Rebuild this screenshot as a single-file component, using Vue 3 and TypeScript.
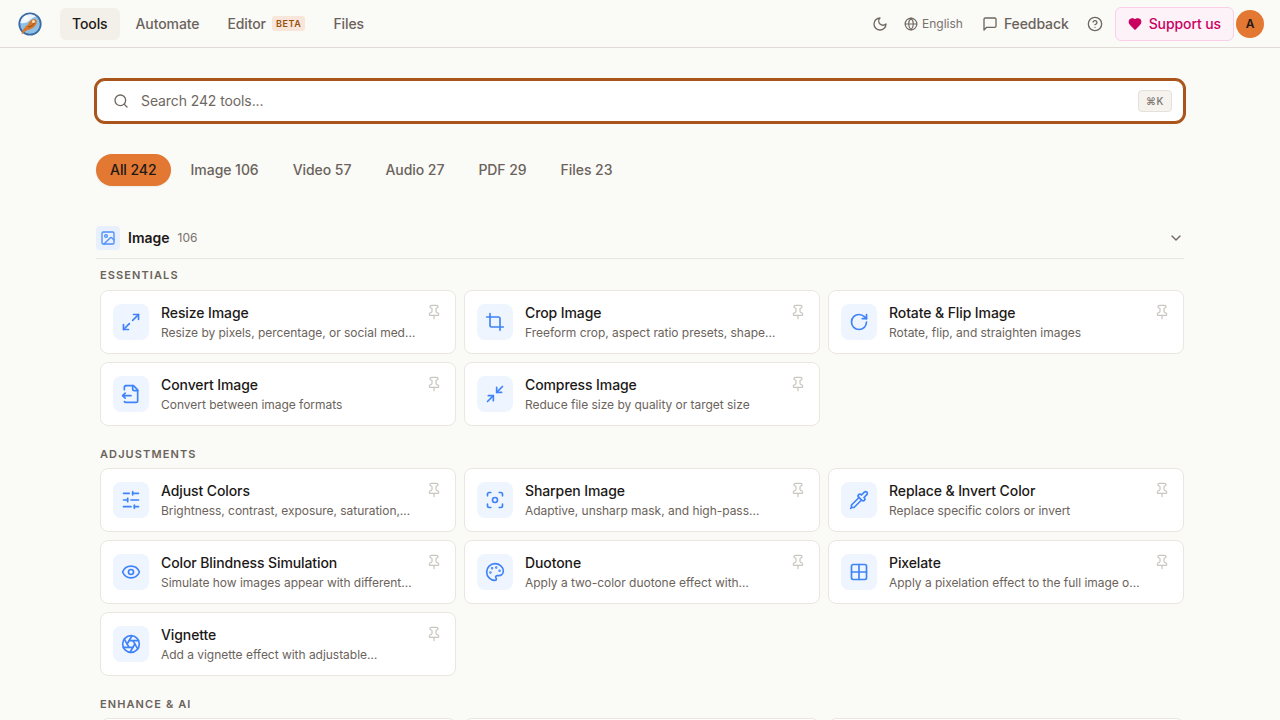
<script setup lang="ts">
interface Tool {
  title: string;
  desc: string;
  icon: string;
}

const icons: Record<string, string> = {
  resize: '<path d="M15 3h6v6"/><path d="m21 3-7 7"/><path d="m3 21 7-7"/><path d="M9 21H3v-6"/>',
  crop: '<path d="M6 2v14a2 2 0 0 0 2 2h14"/><path d="M18 22V8a2 2 0 0 0-2-2H2"/>',
  rotate: '<path d="M21 12a9 9 0 1 1-9-9c2.52 0 4.93 1 6.74 2.74L21 8"/><path d="M21 3v5h-5"/>',
  convert: '<path d="M14 2v4a2 2 0 0 0 2 2h4"/><path d="M4 7V4a2 2 0 0 1 2-2 2 2 0 0 0-2 2"/><path d="M4.063 20.999a2 2 0 0 0 2 1L18 22a2 2 0 0 0 2-2V7l-5-5H6"/><path d="m5 11-3 3"/><path d="m5 17-3-3h10"/>',
  compress: '<path d="m14 10 7-7"/><path d="M20 10h-6V4"/><path d="m3 21 7-7"/><path d="M4 14h6v6"/>',
  sliders: '<path d="M21 4h-7"/><path d="M10 4H3"/><path d="M21 12h-9"/><path d="M8 12H3"/><path d="M21 20h-5"/><path d="M12 20H3"/><path d="M14 2v4"/><path d="M8 10v4"/><path d="M16 18v4"/>',
  focus: '<circle cx="12" cy="12" r="3"/><path d="M3 7V5a2 2 0 0 1 2-2h2"/><path d="M17 3h2a2 2 0 0 1 2 2v2"/><path d="M21 17v2a2 2 0 0 1-2 2h-2"/><path d="M7 21H5a2 2 0 0 1-2-2v-2"/>',
  pipette: '<path d="m2 22 1-1h3l9-9"/><path d="M3 21v-3l9-9"/><path d="m15 6 3.4-3.4a2.1 2.1 0 1 1 3 3L18 9l.4.4a2.1 2.1 0 1 1-3 3l-3.8-3.8a2.1 2.1 0 1 1 3-3l.4.4Z"/>',
  eye: '<path d="M2.062 12.348a1 1 0 0 1 0-.696 10.75 10.75 0 0 1 19.876 0 1 1 0 0 1 0 .696 10.75 10.75 0 0 1-19.876 0"/><circle cx="12" cy="12" r="3"/>',
  palette: '<circle cx="13.5" cy="6.5" r=".5" fill="currentColor"/><circle cx="17.5" cy="10.5" r=".5" fill="currentColor"/><circle cx="8.5" cy="7.5" r=".5" fill="currentColor"/><circle cx="6.5" cy="12.5" r=".5" fill="currentColor"/><path d="M12 2C6.5 2 2 6.5 2 12s4.5 10 10 10c.926 0 1.648-.746 1.648-1.688 0-.437-.18-.835-.437-1.125-.29-.289-.438-.652-.438-1.125a1.64 1.64 0 0 1 1.668-1.668h1.996c3.051 0 5.555-2.503 5.555-5.554C21.965 6.012 17.461 2 12 2z"/>',
  grid: '<path d="M12 3v18"/><path d="M3 12h18"/><rect x="3" y="3" width="18" height="18" rx="2"/>',
  aperture: '<circle cx="12" cy="12" r="10"/><path d="m14.31 8 5.74 9.94"/><path d="M9.69 8h11.48"/><path d="m7.38 12 5.74-9.94"/><path d="M9.69 16 3.95 6.06"/><path d="M14.31 16H2.83"/><path d="m16.62 12-5.74 9.94"/>',
};

const groups: { label: string; tools: Tool[] }[] = [
  {
    label: "Essentials",
    tools: [
      { title: "Resize Image", desc: "Resize by pixels, percentage, or social med…", icon: "resize" },
      { title: "Crop Image", desc: "Freeform crop, aspect ratio presets, shape…", icon: "crop" },
      { title: "Rotate & Flip Image", desc: "Rotate, flip, and straighten images", icon: "rotate" },
      { title: "Convert Image", desc: "Convert between image formats", icon: "convert" },
      { title: "Compress Image", desc: "Reduce file size by quality or target size", icon: "compress" },
    ],
  },
  {
    label: "Adjustments",
    tools: [
      { title: "Adjust Colors", desc: "Brightness, contrast, exposure, saturation,…", icon: "sliders" },
      { title: "Sharpen Image", desc: "Adaptive, unsharp mask, and high-pass…", icon: "focus" },
      { title: "Replace & Invert Color", desc: "Replace specific colors or invert", icon: "pipette" },
      { title: "Color Blindness Simulation", desc: "Simulate how images appear with different…", icon: "eye" },
      { title: "Duotone", desc: "Apply a two-color duotone effect with…", icon: "palette" },
      { title: "Pixelate", desc: "Apply a pixelation effect to the full image o…", icon: "grid" },
      { title: "Vignette", desc: "Add a vignette effect with adjustable…", icon: "aperture" },
    ],
  },
];

const filters = ["All 242", "Image 106", "Video 57", "Audio 27", "PDF 29", "Files 23"];
</script>

<template>
  <div class="page">
    <header class="topbar">
      <div class="nav-left">
        <svg class="logo" viewBox="0 0 24 24" width="24" height="24">
          <circle cx="12" cy="12" r="11.6" fill="#3c6ba3" />
          <circle cx="12" cy="12" r="9.800" fill="#8fc0e6" />
          <path d="M2.400 11C3 6 7 2.300 12 2.300c2.500 0 4.500 1 6 2.200-3 .6-5 2.500-7 4.500-2.500 2-5.500 2.500-8.600 2z" fill="#eef5fa" />
          <circle cx="8" cy="6" r="2.200" fill="#fff" />
          <path d="M3.500 22.500c.4-3.500 1.800-5.500 3.500-7 .5-1.500 1.500-2 3-3 1-2.500 3-5 6-5.500 2.800 0 3.300 2.500 2.300 5-1.500 3.200-4.300 5.200-7.800 5.800-2.700.6-4.200 2.700-7 4.700z" fill="#d8782c" />
          <path d="M10.500 15c2-.2 4.800-1.700 6-4" stroke="#8c4a17" stroke-width="1" fill="none" />
          <circle cx="15.500" cy="9.500" r="1.500" fill="#f7e3c8" />
        </svg>
        <nav class="nav-links">
          <a class="nav-link active">Tools</a>
          <a class="nav-link">Automate</a>
          <a class="nav-link">Editor <span class="beta">BETA</span></a>
          <a class="nav-link">Files</a>
        </nav>
      </div>
      <div class="nav-right">
        <svg class="ico moon" viewBox="0 0 24 24" width="16" height="16"><path d="M12 3a6 6 0 0 0 9 9 9 9 0 1 1-9-9Z" /></svg>
        <div class="lang">
          <svg class="ico" viewBox="0 0 24 24" width="14" height="14"><circle cx="12" cy="12" r="10" /><path d="M12 2a14.500 14.500 0 0 0 0 20 14.500 14.500 0 0 0 0-20" /><path d="M2 12h20" /></svg>
          <span>English</span>
        </div>
        <div class="feedback">
          <svg class="ico" viewBox="0 0 24 24" width="16" height="16"><path d="M21 15a2 2 0 0 1-2 2H7l-4 4V5a2 2 0 0 1 2-2h14a2 2 0 0 1 2 2z" /></svg>
          <span>Feedback</span>
        </div>
        <svg class="ico help" viewBox="0 0 24 24" width="16" height="16"><circle cx="12" cy="12" r="10" /><path d="M9.090 9a3 3 0 0 1 5.830 1c0 2-3 3-3 3" /><path d="M12 17h.01" /></svg>
        <button class="support">
          <svg viewBox="0 0 24 24" width="14" height="14"><path d="M19 14c1.490-1.460 3-3.210 3-5.500A5.500 5.500 0 0 0 16.500 3c-1.760 0-3 .5-4.500 2-1.500-1.500-2.740-2-4.500-2A5.500 5.500 0 0 0 2 8.500c0 2.300 1.500 4.050 3 5.500l7 7Z" /></svg>
          Support us
        </button>
        <div class="avatar">A</div>
      </div>
    </header>

    <main class="content">
      <div class="search">
        <svg class="ico search-ico" viewBox="0 0 24 24" width="16" height="16"><circle cx="11" cy="11" r="8" /><path d="m21 21-4.300-4.300" /></svg>
        <span class="search-text">Search 242 tools...</span>
        <kbd class="kbd">⌘K</kbd>
      </div>

      <div class="filters">
        <button v-for="(f, i) in filters" :key="f" class="filter" :class="{ on: i === 0 }">{{ f }}</button>
      </div>

      <div class="section-head">
        <span class="section-icon">
          <svg viewBox="0 0 24 24" width="16" height="16"><rect width="18" height="18" x="3" y="3" rx="2" ry="2" /><circle cx="9" cy="9" r="2" /><path d="m21 15-3.086-3.086a2 2 0 0 0-2.828 0L6 21" /></svg>
        </span>
        <span class="section-name">Image</span>
        <span class="section-count">106</span>
        <svg class="ico chevron" viewBox="0 0 24 24" width="16" height="16"><path d="m6 9 6 6 6-6" /></svg>
      </div>

      <section v-for="g in groups" :key="g.label" class="group">
        <h3 class="group-label">{{ g.label }}</h3>
        <div class="grid">
          <article v-for="t in g.tools" :key="t.title" class="card">
            <span class="card-icon">
              <svg viewBox="0 0 24 24" width="20" height="20" v-html="icons[t.icon]"></svg>
            </span>
            <div class="card-body">
              <div class="card-title">{{ t.title }}</div>
              <div class="card-desc">{{ t.desc }}</div>
            </div>
            <svg class="pin" viewBox="0 0 24 24" width="16" height="16"><path d="M12 17v5" /><path d="M9 10.760a2 2 0 0 1-1.110 1.790l-1.780.9A2 2 0 0 0 5 15.240V16a1 1 0 0 0 1 1h12a1 1 0 0 0 1-1v-.76a2 2 0 0 0-1.110-1.790l-1.780-.9A2 2 0 0 1 15 10.760V7a1 1 0 0 1 1-1 2 2 0 0 0 0-4H8a2 2 0 0 0 0 4 1 1 0 0 1 1 1z" /></svg>
          </article>
        </div>
      </section>

      <section class="group">
        <h3 class="group-label">Enhance &amp; AI</h3>
        <div class="grid">
          <article v-for="n in 3" :key="n" class="card"></article>
        </div>
      </section>
    </main>
  </div>
</template>

<style>
html,
body {
  margin: 0;
  height: 720px;
  overflow: hidden;
  background: #fafaf7;
}
</style>

<style scoped>
.page {
  font-family: Inter, "Liberation Sans", sans-serif;
  color: #1c1917;
  background: #fafaf7;
  height: 720px;
  overflow: hidden;
}

svg {
  fill: none;
  stroke: currentColor;
  stroke-width: 2;
  stroke-linecap: round;
  stroke-linejoin: round;
  flex: none;
}

.topbar {
  height: 47px;
  border-bottom: 1px solid #e0dcd5;
  display: flex;
  align-items: center;
  justify-content: space-between;
  padding: 0 16px 0 18px;
}

.nav-left,
.nav-right,
.nav-links {
  display: flex;
  align-items: center;
}

.logo {
  stroke: none;
  margin-right: 18px;
}

.nav-links {
  gap: 4px;
}

.nav-link {
  height: 32px;
  padding: 0 12px;
  border-radius: 6px;
  display: flex;
  align-items: center;
  gap: 6px;
  font-size: 14px;
  font-weight: 500;
  letter-spacing: -0.1px;
  color: #6b635b;
}

.nav-link.active {
  background: #f3efe9;
  color: #1c1917;
}

.beta {
  font-size: 9px;
  font-weight: 600;
  letter-spacing: 0.6px;
  color: #99500f;
  background: #f7e6d9;
  border-radius: 3px;
  padding: 1px 4px;
  line-height: 13px;
}

.ico {
  color: #6f6860;
}

.lang {
  display: flex;
  align-items: center;
  gap: 4px;
  font-size: 12px;
  font-weight: 400;
  color: #78716c;
  margin-left: 16px;
}

.feedback {
  display: flex;
  align-items: center;
  gap: 6px;
  font-size: 14px;
  font-weight: 500;
  letter-spacing: -0.1px;
  color: #6b635b;
  margin-left: 19px;
}

.help {
  margin-left: 18px;
}

.support {
  display: flex;
  align-items: center;
  gap: 7px;
  height: 34px;
  box-sizing: border-box;
  margin-left: 12px;
  padding: 0 12px;
  border: 1px solid #fbcfe8;
  border-radius: 6px;
  background: #fdf2f8;
  color: #c9005f;
  font: 500 14px Inter, "Liberation Sans", sans-serif;
  letter-spacing: -0.1px;
}

.support svg {
  fill: currentColor;
}

.avatar {
  width: 28px;
  height: 28px;
  margin-left: 2px;
  border-radius: 50%;
  background: #e27831;
  display: flex;
  align-items: center;
  justify-content: center;
  font-size: 12px;
  font-weight: 600;
}

.content {
  width: 1088px;
  margin: 0 auto;
  padding-top: 32px;
}

.search {
  height: 42px;
  box-sizing: border-box;
  border: 1px solid #a8541a;
  box-shadow: 0 0 0 2px #a8541a;
  border-radius: 9px;
  background: #fff;
  display: flex;
  align-items: center;
  padding: 0 11px 0 16px;
}

.search-text {
  margin-left: 12px;
  font-size: 14px;
  line-height: 20px;
  letter-spacing: -0.1px;
  color: #6f6860;
  flex: 1;
}

.kbd {
  width: 34px;
  height: 22px;
  box-sizing: border-box;
  border: 1px solid #e5e1da;
  border-radius: 4px;
  background: #f6f3ee;
  display: flex;
  align-items: center;
  justify-content: center;
  font: 500 10px Inter, "DejaVu Sans", sans-serif;
  color: #78716c;
  letter-spacing: 0.5px;
}

.filters {
  display: flex;
  gap: 6px;
  margin-top: 32px;
}

.filter {
  height: 32px;
  padding: 0 14px;
  border: 0;
  border-radius: 16px;
  background: transparent;
  font: 500 14px/20px Inter, "Liberation Sans", sans-serif;
  letter-spacing: -0.05px;
  color: #6b635b;
}

.filter.on {
  background: #e27831;
  color: #1c1917;
  box-shadow: 0 1px 2px rgba(0, 0, 0, 0.06);
}

.section-head {
  display: flex;
  align-items: center;
  margin-top: 40px;
  padding-bottom: 8px;
  border-bottom: 1px solid #e9e6e0;
}

.section-icon {
  width: 24px;
  height: 24px;
  border-radius: 4px;
  background: #e8f0fd;
  color: #4d8ef7;
  display: flex;
  align-items: center;
  justify-content: center;
}

.section-name {
  margin-left: 8px;
  font-size: 14px;
  line-height: 20px;
  font-weight: 600;
}

.section-count {
  margin-left: 8px;
  font-size: 12px;
  line-height: 20px;
  color: #78716c;
}

.chevron {
  margin-left: auto;
}

.group {
  padding-top: 9px;
  padding-bottom: 12px;
}

.group-label {
  margin: 0 0 7px;
  padding-left: 4px;
  font-size: 11px;
  line-height: 14px;
  font-weight: 600;
  letter-spacing: 1.1px;
  text-transform: uppercase;
  color: #6b635b;
}

.group:first-of-type .group-label {
  margin-bottom: 8px;
}

.grid {
  display: grid;
  grid-template-columns: repeat(3, 1fr);
  gap: 8px;
  padding-left: 4px;
}

.card {
  height: 64px;
  box-sizing: border-box;
  background: #fff;
  border: 1px solid #ebe7e0;
  border-radius: 8px;
  display: flex;
  align-items: center;
  padding: 0 12px;
  position: relative;
  min-width: 0;
}

.card-icon {
  width: 36px;
  height: 36px;
  border-radius: 8px;
  background: #eff5ff;
  color: #3f83f8;
  display: flex;
  align-items: center;
  justify-content: center;
  flex: none;
}

.card-body {
  margin-left: 12px;
  min-width: 0;
  width: 262px;
}

.card-title {
  font-size: 14px;
  line-height: 20px;
  font-weight: 500;
  letter-spacing: -0.1px;
  color: #1c1917;
}

.card-desc {
  font-size: 12px;
  line-height: 16px;
  margin-top: 2px;
  letter-spacing: -0.03px;
  color: #6b635b;
  white-space: nowrap;
}

.pin {
  position: absolute;
  top: 13px;
  right: 13px;
  color: #c9c5bf;
  stroke-width: 1.8;
}
</style>
